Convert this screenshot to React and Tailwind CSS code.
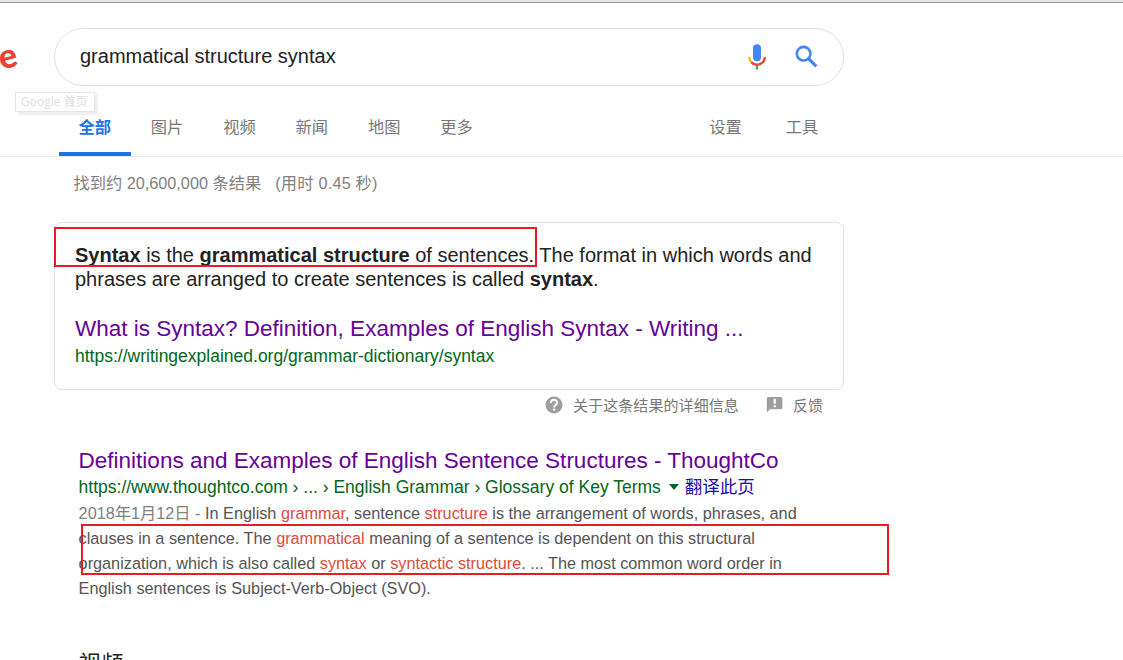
const tabs = ["全部", "图片", "视频", "新闻", "地图", "更多"];

function MicIcon() {
    return (
        <svg width="20" height="26" viewBox="0 0 20 26" fill="none">
            <rect x="6" y="0.2" width="8" height="17" rx="4" fill="#4285f4" />
            <path d="M2.2 13 A7.8 7.6 0 0 0 4.8 18.6" stroke="#fbbc05" strokeWidth="2.4" />
            <path d="M4.4 18.3 A7.8 7.6 0 0 0 17.8 13" stroke="#ea4335" strokeWidth="2.4" />
            <path d="M10 21.4 V25.5" stroke="#34a853" strokeWidth="2.2" />
        </svg>
    );
}

function SearchIcon() {
    return (
        <svg width="30" height="30" viewBox="0 0 30 30" fill="none" stroke="#4285f4">
            <circle cx="11.6" cy="11.7" r="6.8" strokeWidth="2.6" />
            <path d="M16 16.2 L24.3 24.3" strokeWidth="3.2" />
        </svg>
    );
}

function HelpIcon() {
    return (
        <svg width="20" height="20" viewBox="0 0 20 20" fill="none">
            <circle cx="10" cy="10" r="8.5" fill="#9e9e9e" />
            <path
                d="M7 8.1 C7 3.7 13.1 4 13.1 7.7 C13.1 9.8 10.1 10 10.1 12.4"
                stroke="#fff"
                strokeWidth="2"
            />
            <path d="M9 13.6 H11.2 V15.6 H9 Z" fill="#fff" />
        </svg>
    );
}

function FeedbackIcon() {
    return (
        <svg width="19" height="19" viewBox="0 0 19 19">
            <path
                d="M3.2 1 H16 A1.5 1.5 0 0 1 17.4 2.5 V11.8 A1.4 1.4 0 0 1 16 13.2 H5 L1.8 16.2 V2.5 A1.5 1.5 0 0 1 3.2 1 Z"
                fill="#9e9e9e"
            />
            <path d="M8.6 2.8 H10.8 V7.8 H8.6 Z M8.6 9.2 H10.8 V11.2 H8.6 Z" fill="#fff" />
        </svg>
    );
}

function Hit({ children }) {
    return <span className="text-[#dd4b39]">{children}</span>;
}

export default function App() {
    return (
        <div className="relative h-[660px] w-[1123px] overflow-hidden bg-white font-['Liberation_Sans','Noto_Sans_CJK_SC',sans-serif] whitespace-nowrap">
            <div className="h-[3px] border-b border-[#999] bg-[#e6e6e6]" />

            <header className="h-[154px] border-b border-[#ebebeb] pt-[25px]">
                <div className="flex h-[58px] items-center">
                    <div className="flex w-[54px] shrink-0 pb-[5px]">
                        <span className="-ml-[2px] -rotate-[14deg] font-['Lato',sans-serif] text-[34px] leading-[40px] font-black text-[#ea4335]">
                            e
                        </span>
                    </div>
                    <div className="flex h-[58px] w-[790px] items-center rounded-full border border-[#dfe1e5] pr-[21px] pl-[25px]">
                        <span className="flex-1 pb-0.5 text-[20px] text-[#222]">
                            grammatical structure syntax
                        </span>
                        <MicIcon />
                        <span className="ml-[25px]">
                            <SearchIcon />
                        </span>
                    </div>
                </div>

                <nav className="flex h-[70px] pl-[59px] text-[16.25px] leading-6 text-[#777]">
                    {tabs.map((tab, i) => (
                        <span
                            key={tab}
                            className={`w-[72.4px] pt-[29px] pl-[19.4px] ${
                                i === 0
                                    ? "border-b-4 border-[#1a73e8] font-bold text-[#1a73e8]"
                                    : ""
                            }`}
                        >
                            {tab}
                        </span>
                    ))}
                    <span className="ml-[216px] pt-[29px]">设置</span>
                    <span className="ml-[44px] pt-[29px]">工具</span>
                </nav>
            </header>

            <main>
                <p className="mt-[14px] ml-[73.4px] text-[16.25px] leading-6 text-[#808080]">
                    找到约 20,600,000 条结果
                    <span className="ml-[14px] tracking-[0.2px]">(用时 0.45 秒)</span>
                </p>

                <section className="mt-[27px] ml-[54px] h-[168px] w-[790px] rounded-lg border border-[#dfe1e5] px-5 pt-5">
                    <p className="text-[20px] leading-6 text-[#222]">
                        <b>Syntax</b> is the <b>grammatical structure</b> of
                        sentences. The format in which words and
                        <br />
                        phrases are arranged to create sentences is called{" "}
                        <b>syntax</b>.
                    </p>
                    <h3 className="mt-6 text-[22.5px] leading-[28px] text-[#609]">
                        What is Syntax? Definition, Examples of English Syntax - Writing ...
                    </h3>
                    <p className="text-[17.5px] leading-[27px] text-[#006621]">
                        https://writingexplained.org/grammar-dictionary/syntax
                    </p>
                </section>

                <div className="mt-1 ml-[544px] flex h-6 items-center text-[15px] text-[#777]">
                    <span className="pb-0.5">
                        <HelpIcon />
                    </span>
                    <span className="ml-[9px] tracking-[0.08px]">关于这条结果的详细信息</span>
                    <span className="ml-[26px] pb-0.5">
                        <FeedbackIcon />
                    </span>
                    <span className="ml-[9px]">反馈</span>
                </div>

                <article className="mt-[29px] ml-[78.6px]">
                    <h3 className="text-[22.5px] leading-[28px] text-[#609]">
                        Definitions and Examples of English Sentence Structures - ThoughtCo
                    </h3>
                    <div className="flex h-[26px] items-center pb-0.5 text-[17.5px] text-[#006621]">
                        <span>
                            https://www.thoughtco.com › ... › English Grammar › Glossary of Key Terms
                        </span>
                        <i className="ml-2 border-x-5 border-t-6 border-x-transparent border-t-[#006621]" />
                        <span className="ml-1.5 text-[#1a0dab]">翻译此页</span>
                    </div>
                    <p className="text-[16.25px] leading-[25px] text-[#545454]">
                        <span className="text-[#808080]">2018年1月12日 - </span>
                        In English <Hit>grammar</Hit>, sentence <Hit>structure</Hit> is
                        the arrangement of words, phrases, and
                        <br />
                        clauses in a sentence. The <Hit>grammatical</Hit> meaning of a
                        sentence is dependent on this structural
                        <br />
                        organization, which is also called <Hit>syntax</Hit> or{" "}
                        <Hit>syntactic structure</Hit>. ... The most common word order in
                        <br />
                        English sentences is Subject-Verb-Object (SVO).
                    </p>
                </article>

                <h2 className="mt-[47px] ml-[78.6px] text-[22.5px] leading-[33px] text-[#222]">
                    视频
                </h2>
            </main>

            {/* fading logo tooltip */}
            <div className="absolute top-[92px] left-[15px] h-[20px] w-[80px] border border-[#e6e6e6] bg-white pl-[5px] font-['Open_Sans','Noto_Sans_CJK_SC',sans-serif] text-[12px] leading-[18px] text-[#dedede] shadow-[3px_3px_2px_#eee]">
                Google 首页
            </div>

            {/* highlight frames */}
            <div className="absolute top-[227px] left-[54px] h-[40px] w-[483px] border-2 border-[#e81c24]" />
            <div className="absolute top-[524px] left-[81px] h-[51px] w-[808px] border-2 border-[#e81c24]" />
        </div>
    );
}
